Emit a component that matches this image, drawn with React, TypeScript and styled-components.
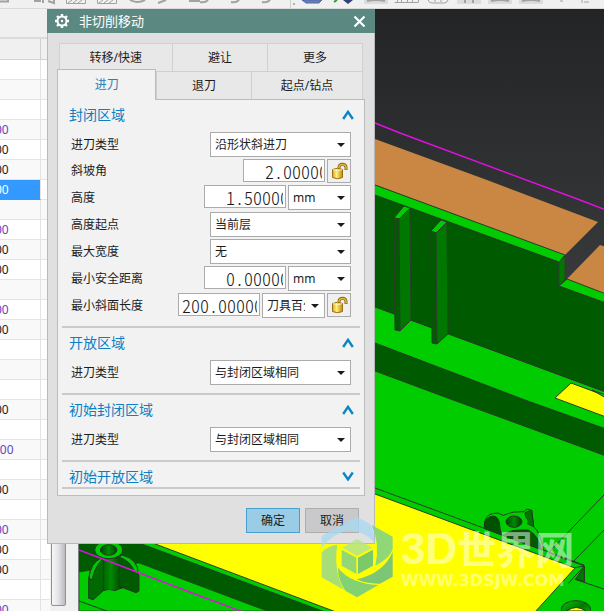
import React from "react";
import styled, { createGlobalStyle, css } from "styled-components";

const GlobalStyle = createGlobalStyle`
  * { box-sizing: border-box; }
  body {
    margin: 0;
    font: 12px/16px "Noto Sans", "Noto Sans CJK SC", sans-serif;
    color: #1c1c1c;
  }
  button, input, select { font: inherit; color: inherit; }
`;

const Page = styled.div`
  position: relative;
  display: flex;
  flex-direction: column;
  height: 100vh;
  overflow: hidden;
  background: #f0f0f0;
`;

const Toolbar = styled.div`
  flex: none;
  height: 9px;
  overflow: hidden;
  background: #f0f0f0;
  border-bottom: 1px solid #d9d9d9;
  svg { display: block; }
`;

const Workspace = styled.div`
  flex: 1;
  min-height: 0;
  display: flex;
`;

const SidePane = styled.div`
  flex: none;
  width: 79px;
  display: flex;
  flex-direction: column;
  overflow: hidden;
  border-right: 1px solid #77807e;
`;

const PaneHeader = styled.div`
  flex: none;
  height: 30px;
  border-bottom: 2px solid #dcdcdc;
`;

const PaneBody = styled.div`
  flex: 1;
  min-height: 0;
  display: flex;
  gap: 1px;
`;

const OperationTable = styled.table`
  flex: none;
  width: 50px;
  height: max-content;
  table-layout: fixed;
  border-collapse: separate;
  border-spacing: 0;
`;

type Tone = "dark" | "purple";

const HeadCell = styled.th`
  height: 21px;
  padding: 0;
  background: #f0f0f0;
  border-bottom: 1px solid #d4d4d4;
  &:first-child { width: 41px; border-right: 1px solid #d0d0d0; }
`;

const BodyRow = styled.tr`
  background: #fff;
  &:nth-child(even) { background: #f9f9f9; }
`;

const Cell = styled.td<{ $tone?: Tone; $selected?: boolean; $long?: boolean }>`
  height: 20px;
  padding: 0;
  overflow: hidden;
  white-space: nowrap;
  text-indent: ${(p) => (p.$long ? -7 : -5)}px;
  border-bottom: 1px solid #e4e4e4;
  color: ${(p) => (p.$tone === "purple" ? "#6a3fc0" : "#1c1c1c")};
  &:first-child { border-right: 1px solid #e4e4e4; }
  ${(p) => p.$selected && css`background: #3399ff; color: #fff; border-color: #3399ff;`}
`;

const ScrollTrack = styled.div`
  width: 15px;
  padding-bottom: 5px;
  background: #f0f0f0;
`;

const ScrollThumb = styled.div`
  height: 100%;
  border: 1px solid #909090;
  border-radius: 2px;
  background: linear-gradient(to right, #f6f6f6, #e6e6e8 45%, #bcbcc0);
`;

const Viewport = styled.div`
  flex: 1;
  min-width: 0;
  overflow: hidden;
  background: linear-gradient(#232425, #3a3b3d 300px);
  svg { display: block; width: 100%; height: 100%; }
`;

const Dialog = styled.section`
  position: absolute;
  left: 47px;
  top: 9px;
  width: 328px;
`;

const TitleBar = styled.header`
  display: flex;
  align-items: center;
  gap: 10px;
  height: 24px;
  padding: 0 9px 0 8px;
  background: #5b8881;
  color: #fff;
`;

const Title = styled.h1`
  flex: 1;
  margin: 0;
  font-size: 13px;
  font-weight: 400;
`;

const CloseButton = styled.button`
  display: flex;
  padding: 0;
  border: 0;
  background: none;
`;

const DialogBody = styled.div`
  padding: 10px 9px;
  border: 1px solid #b9b9b9;
  border-top: 0;
  background: #e0e0e0;
`;

const TabRow = styled.div<{ $inset?: boolean }>`
  display: flex;
  height: 28px;
  margin-right: 2px;
  margin-left: ${(p) => (p.$inset ? 2 : 0)}px;
`;

const Tab = styled.button<{ $grow: number; $active?: boolean }>`
  flex: ${(p) => p.$grow} 1 0;
  padding: 0;
  border: 1px solid #d0d0d0;
  border-width: 1px 0 0 1px;
  background: #e8e8e8;
  &:last-child { border-right-width: 1px; }
  ${(p) =>
    p.$active &&
    css`
      position: relative;
      margin: -2px 0 -1px;
      border: 1px solid #bcbcbc;
      border-bottom: 0;
      background: #f2f2f2;
      color: #2a80b9;
    `}
`;

const Panel = styled.div`
  padding: 0 4px 6px;
  border: 1px solid #bcbcbc;
  background: #f2f2f2;
`;

const Section = styled.section`
  & + & { border-top: 2px solid #cacaca; }
  &:last-child { border-bottom: 2px solid #cacaca; }
`;

const SectionHeader = styled.button`
  display: flex;
  align-items: center;
  justify-content: space-between;
  width: 100%;
  padding: 5px 6px 0 7px;
  border: 0;
  background: none;
  color: #0b7fc2;
  font-size: 14px;
  line-height: 20px;
`;

const Fields = styled.div`
  display: flex;
  flex-direction: column;
  gap: 2px;
  padding: 7px 9px 8px;
`;

const Field = styled.div`
  display: flex;
  align-items: center;
  justify-content: space-between;
`;

const Controls = styled.div`
  display: flex;
  align-items: flex-start;
  gap: 2px;
`;

const NumberBox = styled.input<{ $indent: number }>`
  width: 82px;
  height: 23px;
  padding: 0 2px 0 ${(p) => p.$indent}px;
  border: 1px solid #ababab;
  background: #fff;
  font-family: "Noto Sans CJK SC", sans-serif;
  font-size: 18px;
  font-weight: 300;
  font-feature-settings: "hwid";
  outline: 0;
`;

const SelectWrap = styled.span<{ $narrow?: boolean }>`
  position: relative;
  display: flex;
  width: ${(p) => (p.$narrow ? 63 : 141)}px;
  svg {
    position: absolute;
    right: 6px;
    top: 11px;
    pointer-events: none;
  }
`;

const SelectBox = styled.select`
  appearance: none;
  width: 100%;
  height: 25px;
  padding: 0 19px 0 4px;
  border: 1px solid #ababab;
  border-radius: 0;
  background: #fff;
  outline: 0;
`;

const LockButton = styled.button`
  width: 24px;
  height: 24px;
  padding: 0;
  border: 1px solid #ababab;
  background: #f0f0f0;
  svg { display: block; }
`;

const Footer = styled.footer`
  display: flex;
  justify-content: flex-end;
  gap: 5px;
  padding: 12px 6px 0 0;
`;

const ActionButton = styled.button<{ $primary?: boolean }>`
  width: 54px;
  height: 25px;
  padding: 0;
  border: 1px solid ${(p) => (p.$primary ? "#46a0d0" : "#aeaeae")};
  background: ${(p) => (p.$primary ? "#9acce6" : "#c9c9cc")};
`;

const Watermark = styled.div`
  position: absolute;
  left: 320px;
  top: 515px;
  display: flex;
  gap: 6px;
  color: rgba(255, 255, 255, 0.52);
  pointer-events: none;
`;

const WatermarkText = styled.div`
  display: flex;
  flex-direction: column;
  padding-top: 14px;
  white-space: nowrap;
`;

const WatermarkName = styled.span`
  font: 700 39px/40px "Liberation Sans", "Noto Sans CJK SC", sans-serif;
`;

const WatermarkLead = styled.span`
  font-size: 44px;
`;

const WatermarkUrl = styled.span`
  font: 700 16px/20px "DejaVu Sans", sans-serif;
  color: rgba(255, 255, 255, 0.44);
`;

const Chevron = ({ down }: { down?: boolean }) => (
  <svg width="12" height="12" viewBox="0 0 12 12" fill="none" stroke="#0b86c4" strokeWidth="2.4">
    <path d={down ? "M1.2 1.5 6 8.5 10.8 1.5" : "M1.2 10 6 2.8 10.8 10"} />
  </svg>
);

const Gear = () => (
  <svg width="14" height="14" viewBox="0 0 14 14" fill="none" stroke="#fff">
    <circle cx="7" cy="7" r="4.5" strokeWidth="2" />
    <g strokeWidth="2.4">
      <path d="M7 0v2M7 12v2M0 7h2M12 7h2M2 2l1.5 1.5M10.5 10.5 12 12M12 2l-1.5 1.5M3.5 10.5 2 12" />
    </g>
    <circle cx="7" cy="7" r="1.2" fill="#fff" stroke="none" />
  </svg>
);

const OpenLock = () => (
  <svg width="22" height="22" viewBox="0 0 22 22">
    <defs>
      <linearGradient id="brass" x1="0" x2="1">
        <stop offset="0" stopColor="#d9a520" />
        <stop offset=".4" stopColor="#fff07a" />
        <stop offset="1" stopColor="#c08a10" />
      </linearGradient>
    </defs>
    <path d="M11 9V7.5C11 3 18 3 18 7.5V10" fill="none" stroke="#8a6412" strokeWidth="3" />
    <path d="M11 9V7.5C11 3.4 18 3.4 18 7.5V9.5" fill="none" stroke="#e3b53a" strokeWidth="1.5" />
    <path d="M4.5 9.5Q9.5 7 14.5 9.5V17.5Q9.5 20 4.5 17.5Z" fill="url(#brass)" stroke="#9a7010" />
    <path d="M5 9.7Q9.5 11.5 14 9.7" fill="none" stroke="#fff6b0" />
  </svg>
);

const Combo = ({ label, value, narrow }: { label: string; value: string; narrow?: boolean }) => (
  <SelectWrap $narrow={narrow}>
    <SelectBox aria-label={label} defaultValue={value}>
      <option>{value}</option>
    </SelectBox>
    <svg width="8" height="4" viewBox="0 0 8 4"><path d="M0 0h8L4 4z" fill="#1c1c1c" /></svg>
  </SelectWrap>
);

interface FieldSpec {
  label: string;
  choice?: string;
  number?: string;
  unit?: string;
  lock?: boolean;
}

const FieldRow = ({ label, choice, number, unit, lock }: FieldSpec) => (
  <Field>
    <span>{label}</span>
    <Controls>
      {number && <NumberBox aria-label={label} defaultValue={number} $indent={number.length > 8 ? 3 : 21} />}
      {unit && <Combo label={`${label} 单位`} value={unit} narrow />}
      {choice && <Combo label={label} value={choice} />}
      {lock && <LockButton aria-label={`${label} 锁定`}><OpenLock /></LockButton>}
    </Controls>
  </Field>
);

const sections: { title: string; fields: FieldSpec[] }[] = [
  {
    title: "封闭区域",
    fields: [
      { label: "进刀类型", choice: "沿形状斜进刀" },
      { label: "斜坡角", number: "2.00000", lock: true },
      { label: "高度", number: "1.50000", unit: "mm" },
      { label: "高度起点", choice: "当前层" },
      { label: "最大宽度", choice: "无" },
      { label: "最小安全距离", number: "0.00000", unit: "mm" },
      { label: "最小斜面长度", number: "200.00000", unit: "刀具百分比", lock: true },
    ],
  },
  { title: "开放区域", fields: [{ label: "进刀类型", choice: "与封闭区域相同" }] },
  { title: "初始封闭区域", fields: [{ label: "进刀类型", choice: "与封闭区域相同" }] },
  { title: "初始开放区域", fields: [] },
];

const P: Tone = "purple";
const D: Tone = "dark";
const rows: (Tone | null)[] = [
  null, null, null, P, D, D, D, null, P, D, D, null, P, D, null,
  null, null, D, null, P, null, D, null, P, D, D, null, P,
];
const selectedRow = 6;
const longRow = 19;

const ToolbarIcons = () => (
  <svg width="604" height="8" viewBox="0 0 604 8" fill="none" stroke="#a2a2a2">
    <path d="M0 1.5h8V0M34 1h7M43 0v3M48 1l6 2V0M189 1h11" strokeWidth="2" />
    {[66, 97].map((x) => (
      <path key={x} d={`M${x}.5 0v3.5h19V0M${x + 2} 3l4-3M${x + 7} 3l4-3M${x + 12} 3l4-3`} />
    ))}
    <path d="M130 0Q137 4 145 0M158 3l8-3M200 2q5 1 8-2M231 2q5 1 8-2M262 2q5 1 8-2" strokeWidth="2" />
    <path d="M290.5 0v8" stroke="#d0d0d0" />
    <path d="M294 3v2" stroke="#777" />
    <path d="M302 0h20l-3 3h-13z" fill="#6682bb" stroke="#5266a0" />
    <path d="M334 2l3-2" stroke="#24a33c" strokeWidth="2" />
    <path d="M343 0h10l-5 4z" fill="#353f78" stroke="none" />
    {[364, 457, 488, 519].map((x) => (
      <g key={x}>
        <path d={`M${x} 0h24v4h-24z`} fill="#dcdcdc" stroke="none" />
        <path d={x === 457 ? "M465 3V0M473 3V0" : `M${x + 3} 1q9-2 18 0`} strokeWidth="2" />
      </g>
    ))}
    <path d="M394.5 2.5h24M397.5 0v2M401.5 0v2M407.5 0v2M412.5 0v2M418.5 0v2" />
    <path d="M428 0q1 3 4 3h12q3 0 4-3M434 1h2M440 1h2" />
    <path d="M560 1h3M582 3V0M584 2h5" />
  </svg>
);

const edge = "#2a3f2a";

const Scene = () => (
  <svg viewBox="79 9 525 602" preserveAspectRatio="xMinYMin slice">
    <defs>
      <linearGradient id="bore" x1="0" x2="1">
        <stop offset="0" stopColor="#004800" />
        <stop offset=".5" stopColor="#008a00" />
        <stop offset="1" stopColor="#003c00" />
      </linearGradient>
      <linearGradient id="fillet" x1="0" y1="0" x2="1" y2="1">
        <stop offset="0" stopColor="#00cc00" />
        <stop offset=".5" stopColor="#007800" />
        <stop offset="1" stopColor="#00cc00" />
      </linearGradient>
    </defs>
    <path d="M79 197 375 307 604 392V611H79Z" fill="#00cc00" />
    <g stroke={edge} strokeWidth="1">
      <path d="M300 111 375 139 487 180 598 222 565 255 300 157Z" fill="#c98743" stroke="none" />
      <path d="M600 245 606 247V294L567 279Z" fill="#c98743" stroke="none" />
      <path d="M300 167 375 195 559 262V286L606 303V392L375 307 300 280Z" fill="#005a00" />
      <path d="M300 157 375 185 565 255 559 262 375 195 300 167Z" fill="#00cc00" />
      <path d="M559 262 565 256V279L559 286Z" fill="#007800" />
      <path d="M567 279 606 294V303L559 286Z" fill="#00cc00" />
      <path d="M404 206 410 208 399 219 394 218ZM441 220 447 222 436 233 431 231Z" fill="#00cc00" />
      <path d="M394 218 399 219 400 331 395 330ZM431 231 436 233 437 344 432 343Z" fill="#005a00" />
      <path d="M399 219 410 208 411 320 400 331ZM436 233 447 222 448 334 437 344Z" fill="#007800" />
      <path d="M300 316 375 343 525 400 606 429V456L453 400 375 371 300 344Z" fill="#005a00" />
      <path d="M571 383 606 396V417L555 398Z" fill="#ffff00" />
      <path d="M592 390 606 395V398Z" fill="#00cc00" />
    </g>
    <g stroke={edge} fill="none">
      <path d="M375 488 584 565" />
      <path d="M604 495 549 552M604 530 573 562" />
    </g>
    <path d="M79 543H139L325 612H264L138 564 137 575 79 572Z" fill="#005a00" />
    <path d="M139 563 267 611H79V572Z" fill="#00cc00" stroke={edge} strokeWidth=".7" />
    <path d="M200 412 375 494 575 568 535 612H336L150 542Z" fill="#ffff00" stroke={edge} />
    <path d="M139 543 325 612" stroke={edge} />
    <g transform="translate(50 540) scale(.333333)" stroke="#223a22" strokeWidth="3">
      <path d="M87 183 170 213" fill="none" />
      <path d="M145 58 160 55H210L220 50V143Q205 147 195 152 178 144 160 152Z" fill="url(#bore)" />
      <path d="M152 57Q120 72 116 118V175L130 179 160 152V58Z" fill="#006a00" />
      <path d="M152 55Q121 70 117 115L127 119Q132 85 155 60Z" fill="#00c800" />
      <path d="M208 50Q240 65 252 90L267 105V153L258 158 208 139Z" fill="#005a00" />
      <path d="M216 45Q266 58 265 103L254 97Q244 65 208 51Z" fill="#00c800" />
      <ellipse cx="176" cy="30" rx="42" ry="26" fill="#00cc00" />
      <ellipse cx="176" cy="30" rx="25" ry="16" fill="url(#bore)" />
    </g>
    <g transform="translate(310 500) scale(.333333)" stroke="#223a22" strokeWidth="3">
      <path d="M523 85Q520 45 550 40 565 36 580 46 610 32 642 35 650 22 665 32L671 80Q690 95 701 150L640 130 575 105Z" fill="#00cc00" />
      <path d="M523 85Q520 50 550 48 570 50 570 85L575 105Z" fill="#005200" />
      <path d="M645 38 665 30 671 80 650 70Z" fill="#007800" />
      <path d="M580 105 610 90H655Q685 105 695 150L635 125Z" fill="#005a00" />
      <ellipse cx="612" cy="65" rx="40" ry="25" fill="#00cc00" stroke="none" />
      <ellipse cx="612" cy="65" rx="24" ry="17" fill="url(#bore)" />
      <path d="M715 158 823 198V245M795 203 823 198 775 250M795 238 884 268" fill="none" />
      <path d="M823 200V245L797 237Z" fill="#007800" />
      <ellipse cx="798" cy="328" rx="44" ry="26" fill="url(#fillet)" />
      <path d="M770 333Q798 312 828 333Z" fill="#ffff00" />
    </g>
    <path d="M300 95 375 123 400 133 580 200 606 210M79 550 200 596 243 612" fill="none" stroke="#e010e0" strokeWidth="1.4" />
  </svg>
);

const Emblem = () => (
  <svg width="75" height="84" viewBox="30 45 225 252" fillOpacity=".86">
    <path d="M35 108 141 50 180 72Q192 92 194 128 165 95 118 90 65 100 35 145Z" fill="#a8d8f2" fillOpacity=".75" />
    <path d="M185 75 248 110V148Q240 175 196 197 211 130 185 75Z" fill="#7dd18a" />
    <path d="M248 156V230L210 251Q170 252 140 238 220 220 248 156Z" fill="#68bd88" />
    <path d="M84 203Q120 250 205 255L141 292 106 272Q84 240 84 203Z" fill="#6dca86" />
    <path d="M35 158Q50 138 82 134 70 210 101 269L35 232Z" fill="#98d98c" />
    <path d="M97 143 141 117 187 143 141 168Z" fill="#b4e48c" />
    <path d="M95 149 139 173V222L95 197Z" fill="#82d088" />
    <path d="M144 173 189 149V197L144 222Z" fill="#66c07c" />
  </svg>
);

export default function App() {
  return (
    <Page>
      <GlobalStyle />
      <Toolbar><ToolbarIcons /></Toolbar>
      <Workspace>
        <SidePane>
          <PaneHeader />
          <PaneBody>
            <OperationTable>
              <thead><tr><HeadCell /><HeadCell /></tr></thead>
              <tbody>
                {rows.map((tone, i) => (
                  <BodyRow key={i}>
                    <Cell $tone={tone ?? undefined} $selected={i === selectedRow} $long={i === longRow}>
                      {tone ? (i === longRow ? "000" : "00") : ""}
                    </Cell>
                    <Cell />
                  </BodyRow>
                ))}
              </tbody>
            </OperationTable>
            <ScrollTrack><ScrollThumb /></ScrollTrack>
          </PaneBody>
        </SidePane>
        <Viewport><Scene /></Viewport>
      </Workspace>

      <Dialog role="dialog" aria-labelledby="dialog-title">
        <TitleBar>
          <Gear />
          <Title id="dialog-title">非切削移动</Title>
          <CloseButton aria-label="关闭">
            <svg width="13" height="13" viewBox="0 0 13 13" stroke="#fff" strokeWidth="2.2"><path d="M1.5 1.5l10 10M11.5 1.5l-10 10" /></svg>
          </CloseButton>
        </TitleBar>
        <DialogBody>
          <TabRow $inset>
            <Tab $grow={113}>转移/快速</Tab>
            <Tab $grow={96}>避让</Tab>
            <Tab $grow={95}>更多</Tab>
          </TabRow>
          <TabRow>
            <Tab $grow={99} $active>进刀</Tab>
            <Tab $grow={95}>退刀</Tab>
            <Tab $grow={112}>起点/钻点</Tab>
          </TabRow>
          <Panel>
            {sections.map(({ title, fields }) => (
              <Section key={title}>
                <SectionHeader aria-expanded={fields.length > 0}>
                  {title}
                  <Chevron down={fields.length === 0} />
                </SectionHeader>
                {fields.length > 0 && (
                  <Fields>
                    {fields.map((field) => <FieldRow key={field.label} {...field} />)}
                  </Fields>
                )}
              </Section>
            ))}
          </Panel>
          <Footer>
            <ActionButton $primary>确定</ActionButton>
            <ActionButton>取消</ActionButton>
          </Footer>
        </DialogBody>
      </Dialog>

      <Watermark>
        <Emblem />
        <WatermarkText>
          <WatermarkName><WatermarkLead>3D</WatermarkLead>世界网</WatermarkName>
          <WatermarkUrl>WWW.3DSJW.COM</WatermarkUrl>
        </WatermarkText>
      </Watermark>
    </Page>
  );
}
